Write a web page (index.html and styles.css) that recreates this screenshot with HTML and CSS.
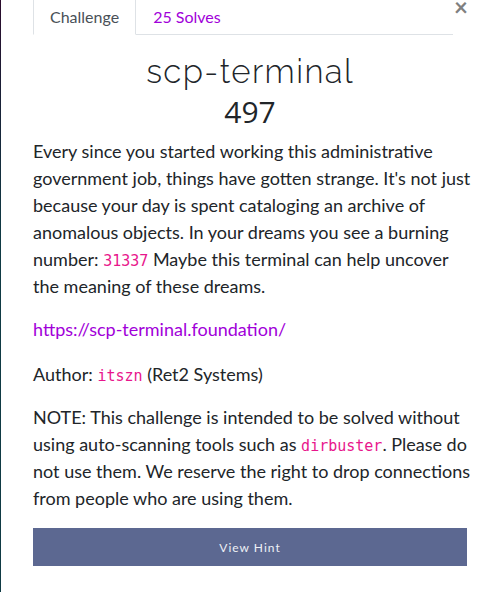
FILE: index.html
```html
<!DOCTYPE html>
<html>
<head>
<meta charset="utf-8">
<link rel="stylesheet" href="styles.css">
</head>
<body>
<div class="page">
  <div class="edge"></div>
  <div class="modal">
    <div class="nav-row">
      <ul class="tabs">
        <li class="tab active">Challenge</li>
        <li class="tab"><a href="#">25 Solves</a></li>
      </ul>
      <button class="close" aria-label="Close">&times;</button>
    </div>
    <h2 class="name">scp-terminal</h2>
    <h3 class="value">497</h3>
    <div class="desc">
      <p>Every since you started working this administrative government job, things have gotten strange. It's not just because your day is spent cataloging an archive of anomalous objects. In your dreams you see a burning number: <code>31337</code> Maybe this terminal can help uncover the meaning of these dreams.</p>
      <p class="link"><a href="#">https://scp-terminal.foundation/</a></p>
      <p>Author: <code>itszn</code> (Ret2 Systems)</p>
      <p>NOTE: This challenge is intended to be solved without using auto-scanning tools such as <code>dirbuster</code>. Please do not use them. We reserve the right to drop connections from people who are using them.</p>
    </div>
    <button class="hint">View Hint</button>
  </div>
</div>
</body>
</html>
```

FILE: styles.css
```css
html, body {
  margin: 0;
  padding: 0;
  background: #fff;
}
body {
  font-family: Lato, "Open Sans", sans-serif;
  color: #212529;
  overflow: hidden;
}
.page {
  display: flex;
  height: 592px;
}
.edge {
  width: 1px;
  flex: none;
  background: linear-gradient(#2b0b2c 0%, #1a1f36 15%, #0f3a44 40%, #0f3a44 100%);
}
.modal {
  width: 434px;
  padding-left: 32px;
  display: flex;
  flex-direction: column;
}
.nav-row {
  display: flex;
  align-items: flex-start;
  height: 35px;
}
.tabs {
  list-style: none;
  margin: 0;
  padding: 0;
  display: flex;
  width: 420px;
  height: 35px;
  box-sizing: border-box;
  border-bottom: 1px solid #dee2e6;
}
.tab {
  font-size: 16px;
  line-height: 24px;
  padding: 5px 16px 6px;
  color: #495057;
  margin-bottom: -1px;
  border: 1px solid transparent;
  border-top: none;
}
.tab.active {
  border-color: #dee2e6;
  border-bottom-color: #fff;
  background: #fff;
}
.tab a {
  color: #a100d9;
  text-decoration: none;
}
.close {
  margin-left: auto;
  margin-top: -5px;
  margin-right: -1px;
  background: none;
  border: none;
  padding: 0;
  font-family: Lato, sans-serif;
  font-size: 24px;
  font-weight: 700;
  line-height: 24px;
  color: #808080;
}
.name {
  margin: 17px 0 0;
  text-align: center;
  font-family: Raleway, "Open Sans", sans-serif;
  font-weight: 300;
  font-size: 33px;
  line-height: 40px;
  letter-spacing: 1.4px;
  color: #212529;
}
.value {
  margin: 2px 0 0;
  text-align: center;
  font-family: "Open Sans", sans-serif;
  font-weight: 400;
  font-size: 30px;
  line-height: 36px;
  color: #212529;
}
.desc {
  margin-top: 8px;
  margin-right: -4px;
  font-size: 18px;
  line-height: 27px;
}
.desc p {
  margin: 0 0 16px;
}
.desc p.link {
  margin-bottom: 18px;
}
.desc a {
  color: #a100d9;
  text-decoration: none;
}
code {
  font-family: "DejaVu Sans Mono", monospace;
  font-size: 15px;
  line-height: 1;
  color: #e8168c;
}
.hint {
  margin-top: 0;
  height: 38px;
  width: 434px;
  border: none;
  background: #5c6891;
  color: #eef0f5;
  font-family: Lato, sans-serif;
  font-size: 12px;
  letter-spacing: 1px;
}
```
